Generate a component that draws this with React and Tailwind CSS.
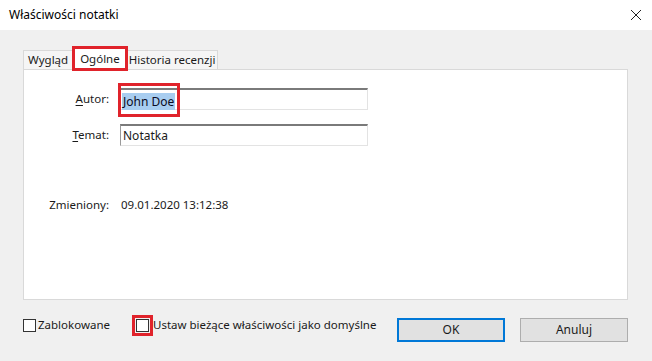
import React from "react";

const font = { fontFamily: '"Noto Sans", "Segoe UI", sans-serif' };

const Field = ({ label, accel, value, highlight }) => (
  <div className="flex items-center h-[22px]">
    <div className="w-[96px] text-right pr-[11px] text-[11.5px] text-[#1a1a1a]">
      <span className="underline underline-offset-2">{accel}</span>
      {label}
    </div>
    <div className="relative w-[248px] h-[22px] bg-white border border-[#e3e3e3] border-t-2 border-t-[#7a7a7a] border-l-[#9a9a9a] flex items-center pl-[1px]">
      {highlight ? (
        <span className="relative">
          <span className="bg-[#a8cdf0] text-[#0a0a23] text-[12px] leading-[16px] px-[1px]">
            {value}
          </span>
          <span className="absolute -left-[4px] -top-[5px] -right-[5px] -bottom-[5px] border-[3px] border-[#e0232b]" />
        </span>
      ) : (
        <span className="text-[12px] text-[#1a1a1a] pl-[1px]">{value}</span>
      )}
    </div>
  </div>
);

const App = () => {
  return (
    <div
      className="w-[652px] h-[361px] bg-[#f0f0f0] flex flex-col overflow-hidden"
      style={font}
    >
      {/* Title bar */}
      <div className="h-[30px] bg-white flex items-center justify-between pl-[9px] pr-[10px]">
        <span className="text-[12px] text-[#000]">Właściwości notatki</span>
        <svg width="12" height="12" viewBox="0 0 12 12">
          <path d="M1 1 L11 11 M11 1 L1 11" stroke="#222" strokeWidth="1" />
        </svg>
      </div>

      {/* Tabs */}
      <div className="pl-[23px] pr-[24px] pt-[17px]">
        <div className="flex items-end h-[22px] text-[11.5px]">
          <div className="h-[19px] px-[4px] border border-b-0 border-[#d9d9d9] bg-[#f5f5f5] flex items-center text-[#1a1a1a]">
            Wygląd
          </div>
          <div className="relative h-[23px] px-[6px] border border-b-0 border-[#d9d9d9] bg-white flex items-start pt-[2px] text-[#1a1a1a] -mb-[1px] z-10">
            Ogólne
            <span className="absolute -left-[2px] -top-[2px] -right-[2px] -bottom-[1px] border-[3px] border-[#e0232b]" />
          </div>
          <div className="h-[19px] px-[2px] border border-b-0 border-l-0 border-[#d9d9d9] bg-[#f5f5f5] flex items-center text-[#1a1a1a]">
            Historia recenzji
          </div>
        </div>

        {/* Panel */}
        <div className="h-[231px] bg-white border border-[#d9d9d9] pt-[18px]">
          <div className="flex flex-col gap-[14px]">
            <Field label="utor:" accel="A" value="John Doe" highlight />
            <Field label="emat:" accel="T" value="Notatka" />
          </div>
          <div className="flex mt-[50px] text-[11.5px] text-[#1a1a1a]">
            <div className="w-[96px] text-right pr-[11px]">Zmieniony:</div>
            <div className="pl-[1px]">09.01.2020 13:12:38</div>
          </div>
        </div>
      </div>

      {/* Bottom row */}
      <div className="flex items-start pl-[23px] pr-[24px] mt-[18px] text-[11.5px] text-[#1a1a1a]">
        <div className="flex items-center h-[14px]">
          <span className="w-[13px] h-[13px] border border-[#333] bg-white" />
          <span className="ml-[2px]">Zablokowane</span>
        </div>
        <div className="flex items-center h-[14px] ml-[26px]">
          <span className="relative w-[13px] h-[13px] border border-[#333] bg-white">
            <span className="absolute -left-[5px] -top-[5px] -right-[5px] -bottom-[5px] border-[3px] border-[#e0232b]" />
          </span>
          <span className="ml-[4px]">Ustaw bieżące właściwości jako domyślne</span>
        </div>
        <div className="ml-auto flex gap-[15px]">
          <button className="w-[108px] h-[24px] bg-[#e1e1e1] border-2 border-[#0078d7] text-[12px]">
            OK
          </button>
          <button className="w-[108px] h-[24px] bg-[#e1e1e1] border border-[#adadad] text-[12px]">
            Anuluj
          </button>
        </div>
      </div>
    </div>
  );
};

export default App;
